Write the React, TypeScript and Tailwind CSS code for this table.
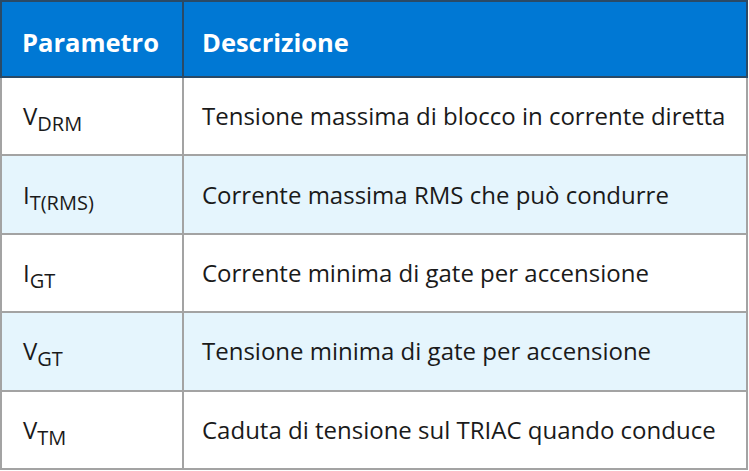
import React from "react";

const rows: { p: string; sub: string; d: string }[] = [
  { p: "V", sub: "DRM", d: "Tensione massima di blocco in corrente diretta" },
  { p: "I", sub: "T(RMS)", d: "Corrente massima RMS che può condurre" },
  { p: "I", sub: "GT", d: "Corrente minima di gate per accensione" },
  { p: "V", sub: "GT", d: "Tensione minima di gate per accensione" },
  { p: "V", sub: "TM", d: "Caduta di tensione sul TRIAC quando conduce" },
];

export default function App() {
  return (
    <div className="w-[749px] h-[471px] bg-white" style={{ fontFamily: '"Open Sans", "Noto Sans", sans-serif' }}>
      <table className="w-[748px] border-collapse text-[#1a1a1a]">
        <thead>
          <tr className="bg-[#0078d4] h-[76px]">
            <th className="w-[182px] border-2 border-[#2a4a66] text-left pl-[20px] pt-[6px] text-white text-[25.5px] font-bold">Parametro</th>
            <th className="border-2 border-[#2a4a66] text-left pl-[18px] pt-[6px] text-white text-[25.5px] font-bold">Descrizione</th>
          </tr>
        </thead>
        <tbody>
          {rows.map((r, i) => (
            <tr key={i} className={`h-[78.4px] ${i % 2 === 1 ? "bg-[#e5f5fd]" : "bg-white"}`}>
              <td className="border-2 border-[#a3a3a3] pl-[21px] text-[24px] leading-none">
                {r.p}
                <sub className="text-[20px] align-baseline relative top-[6px]">{r.sub}</sub>
              </td>
              <td className="border-2 border-[#a3a3a3] pl-[18px] text-[24px]">{r.d}</td>
            </tr>
          ))}
        </tbody>
      </table>
    </div>
  );
}
